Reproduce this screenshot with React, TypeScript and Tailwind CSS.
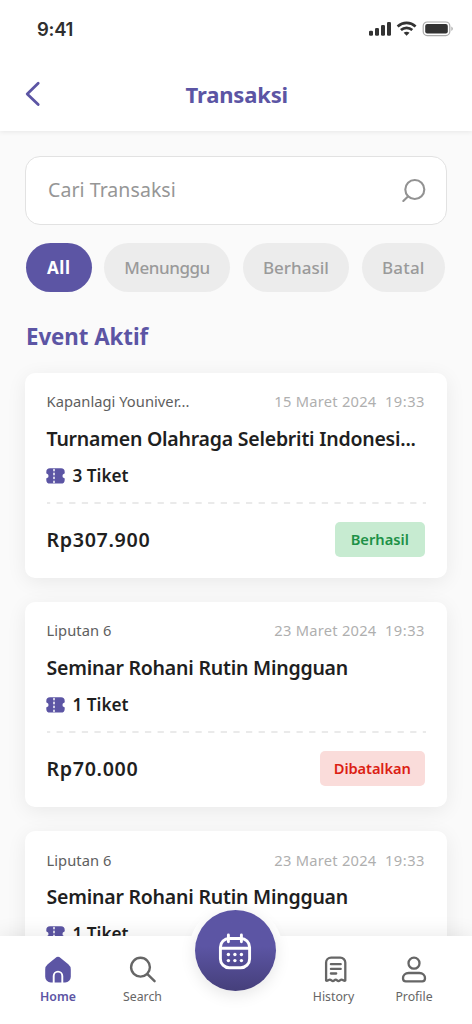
import React from "react";

type Transaction = {
  organizer: string;
  organizerClass: string;
  date: string;
  time: string;
  title: string;
  titleClass: string;
  tickets: number;
  price: string;
  status: "Berhasil" | "Dibatalkan";
};

const transactions: Transaction[] = [
  {
    organizer: "Kapanlagi Youniver...",
    organizerClass: "tracking-[0.04px]",
    date: "15 Maret 2024",
    time: "19:33",
    title: "Turnamen Olahraga Selebriti Indonesi...",
    titleClass: "tracking-[-0.23px]",
    tickets: 3,
    price: "Rp307.900",
    status: "Berhasil",
  },
  {
    organizer: "Liputan 6",
    organizerClass: "tracking-[0.05px]",
    date: "23 Maret 2024",
    time: "19:33",
    title: "Seminar Rohani Rutin Mingguan",
    titleClass: "tracking-[-0.22px]",
    tickets: 1,
    price: "Rp70.000",
    status: "Dibatalkan",
  },
  {
    organizer: "Liputan 6",
    organizerClass: "tracking-[0.05px]",
    date: "23 Maret 2024",
    time: "19:33",
    title: "Seminar Rohani Rutin Mingguan",
    titleClass: "tracking-[-0.22px]",
    tickets: 1,
    price: "Rp70.000",
    status: "Dibatalkan",
  },
];

function StatusBar() {
  return (
    <div className="flex h-[58px] items-center justify-between pl-[37px] pr-[18px] text-[#2f2f2f]">
      <span className="pt-[2px] font-['Inter',sans-serif] text-[18.5px] font-semibold tracking-[-0.3px]">9:41</span>
      <svg width="86" height="16" viewBox="0 0 86 16" fill="none">
        <g fill="#333">
          <rect x="1" y="9.7" width="4" height="5" rx="1.3" />
          <rect x="7" y="7" width="4" height="7.7" rx="1.3" />
          <rect x="13" y="4" width="4" height="10.7" rx="1.3" />
          <rect x="19" y="1" width="4" height="13.7" rx="1.3" />
        </g>
        <g stroke="#333" strokeWidth="2.7">
          <path d="M29.6 5.4c5.2-4.6 12.8-4.6 18 0" />
          <path d="M32.9 9c3.3-2.9 8.1-2.9 11.4 0" />
        </g>
        <path d="M35.7 11.7c1.7-1.3 4.1-1.3 5.8 0l-2.9 3z" fill="#333" />
        <rect x="55.2" y="1" width="26.6" height="13.6" rx="4" stroke="#aaa" strokeWidth="1.2" />
        <rect x="57.2" y="3" width="22.6" height="9.6" rx="2" fill="#333" />
        <path d="M83.4 5.6c1.9.7 1.9 3.7 0 4.4z" fill="#aaa" />
      </svg>
    </div>
  );
}

function TicketIcon() {
  return (
    <svg width="19" height="16" viewBox="0 0 19 16" className="-ml-[0.5px] shrink-0">
      <path
        d="M4 .2h11a3.7 3.7 0 0 1 3.7 3.7v1a.8.8 0 0 1-.6.8 2.3 2.3 0 0 0 0 4.4.8.8 0 0 1 .6.8v1a3.7 3.7 0 0 1-3.7 3.7H4a3.7 3.7 0 0 1-3.7-3.7v-1a.8.8 0 0 1 .6-.8 2.3 2.3 0 0 0 0-4.4.8.8 0 0 1-.6-.8v-1A3.7 3.7 0 0 1 4 .2z"
        fill="#5c55a4"
      />
      <path d="M8 1.4v13.2" stroke="#fff" strokeWidth="1.5" strokeLinecap="round" strokeDasharray="1.3 2.66" />
    </svg>
  );
}

function TransactionCard({ item }: { item: Transaction }) {
  const success = item.status === "Berhasil";
  return (
    <article className="h-[204.5px] shrink-0 rounded-[10px] bg-white pl-[21.5px] pr-[22px] pt-[17.2px] shadow-[0_4px_20px_rgba(0,0,0,0.07)]">
      <div className="flex h-[22px] items-center justify-between text-[14.7px]">
        <span className={`text-[#5e5e5e] ${item.organizerClass}`}>{item.organizer}</span>
        <span className="flex gap-[8.5px] text-[#afafaf]">
          <span className="tracking-[0.24px]">{item.date}</span>
          <span className="tracking-[0.5px]">{item.time}</span>
        </span>
      </div>
      <h3 className={`mt-[12.6px] h-[28px] whitespace-nowrap text-[19.5px] font-semibold leading-[28px] text-[#1f1f1f] ${item.titleClass}`}>
        {item.title}
      </h3>
      <div className="mt-[11px] flex h-[24px] items-center gap-[7.5px]">
        <TicketIcon />
        <span className="text-[17.2px] font-semibold leading-[24px] text-[#1f1f1f]">{item.tickets} Tiket</span>
      </div>
      <svg width="379" height="2" viewBox="0 0 379 2" className="mt-[14px] block">
        <path d="M0 1h379" stroke="#e4e4e4" strokeWidth="1.3" strokeDasharray="6.3 6.33" strokeDashoffset="3.1" />
      </svg>
      <div className="mt-[18px] flex h-[35px] items-center justify-between">
        <span className="text-[19.7px] font-semibold tracking-[0.65px] text-[#1f1f1f]">{item.price}</span>
        <span
          className={`flex h-[35px] items-center justify-center rounded-[5px] text-[14.7px] font-semibold ${
            success ? "w-[90.5px] bg-[#c7ebd1] text-[#1d9147]" : "w-[105.5px] bg-[#fadcda] tracking-[-0.12px] text-[#dc1f14]"
          }`}
        >
          {item.status}
        </span>
      </div>
    </article>
  );
}

function NavItem({ label, className, children }: { label: string; className: string; children: React.ReactNode }) {
  return (
    <button className={`flex flex-col items-center ${className}`}>
      {children}
      <span className="mt-[4px] text-[12.3px] leading-[17px]">{label}</span>
    </button>
  );
}

function BottomNav() {
  return (
    <nav className="absolute inset-x-0 bottom-0 h-[88px] bg-white shadow-[0_-3px_18px_rgba(0,0,0,0.08)]">
      <div className="absolute left-[188.5px] top-[-32px] size-[94px] rounded-full bg-white" />
      <div className="relative flex h-full pt-[20px]">
        <NavItem label="Home" className="ml-[28px] w-[60px] font-semibold text-[#5c55a4]">
          <svg width="28" height="28" viewBox="0 0 28 28">
            <path
              d="M11.4 1.9a4.1 4.1 0 0 1 5.2 0l7.7 6.3a6.8 6.8 0 0 1 2.5 5.2v7.4a5.6 5.6 0 0 1-5.6 5.6H6.8a5.6 5.6 0 0 1-5.6-5.6v-7.4a6.8 6.8 0 0 1 2.5-5.2z"
              fill="#5c55a4"
            />
            <path d="M9.7 27v-7.1a4.3 4.3 0 0 1 8.6 0V27" fill="none" stroke="#fff" strokeWidth="1.9" />
          </svg>
        </NavItem>
        <NavItem label="Search" className="ml-[24.5px] w-[60px] text-[#666]">
          <svg width="28" height="28" viewBox="0 0 28 28" fill="none" stroke="#666" strokeWidth="2.4" strokeLinecap="round">
            <circle cx="11.5" cy="11.2" r="9.4" />
            <path d="m18.4 18.1 7.2 7.1" />
          </svg>
        </NavItem>
        <div className="flex flex-1 justify-end">
          <NavItem label="History" className="w-[60px] text-[#666]">
            <svg width="28" height="28" viewBox="0 0 28 28" fill="none" stroke="#666" strokeWidth="2.3" strokeLinecap="round" strokeLinejoin="round" className="ml-[3px]">
              <path d="M5.1 24.6V6.6a5 5 0 0 1 5-5h9.2a5 5 0 0 1 5 5v18c-1.3.9-2.3-1-3.7-1-1.5 0-1.8 1.5-3.1 1.5s-1.5-1.5-2.8-1.5-1.5 1.5-2.8 1.5-1.6-1.5-3.1-1.5c-1.4 0-2.4 1.9-3.7 1z" />
              <path d="M9.9 8.2h9.800M9.9 12.900h9.800M9.900 17.500h5.300" />
            </svg>
          </NavItem>
        </div>
        <NavItem label="Profile" className="ml-[20.5px] mr-[28px] w-[60px] text-[#666]">
          <svg width="28" height="28" viewBox="0 0 28 28" fill="none" stroke="#666" strokeWidth="2.3">
            <circle cx="14" cy="7.2" r="5.5" />
            <path d="M8.7 17h10.600c3.500 0 5.700 2.500 5.700 5.200 0 1.800-1 3.100-2.800 3.100H5.800C4 25.300 3 24 3 22.200c0-2.700 2.200-5.200 5.700-5.200z" />
          </svg>
        </NavItem>
      </div>
      <button
        aria-label="Events"
        className="absolute left-[195px] top-[-26px] flex size-[81px] items-center justify-center rounded-full bg-linear-to-b from-[#5c55a4] from-45% to-[#453f7b] pr-[1.5px] shadow-[0_4px_16px_rgba(0,0,0,0.1)]"
      >
        <svg width="36" height="38" viewBox="0 0 36 38" fill="none" stroke="#fff" strokeWidth="2.9" strokeLinecap="round">
          <rect x="3.4" y="6.5" width="29.2" height="29.2" rx="8.8" />
          <path d="M3.4 16.2h29.2M11.4 2.9v6.8M24.4 2.9v6.8" />
          <g fill="#fff" stroke="none">
            <circle cx="11.4" cy="22.5" r="1.7" />
            <circle cx="17.9" cy="22.5" r="1.7" />
            <circle cx="24.4" cy="22.5" r="1.7" />
            <circle cx="11.4" cy="28.6" r="1.7" />
            <circle cx="17.9" cy="28.6" r="1.7" />
            <circle cx="24.4" cy="28.6" r="1.7" />
          </g>
        </svg>
      </button>
    </nav>
  );
}

export default function App() {
  return (
    <div className="relative flex h-[1024px] w-[472px] flex-col overflow-hidden bg-[#fafafa] font-['Noto_Sans',sans-serif]">
      <header className="h-[131px] shrink-0 bg-white shadow-[0_1px_5px_rgba(0,0,0,0.08)]">
        <StatusBar />
        <div className="grid h-[73px] grid-cols-[60px_1fr_60px] items-center">
          <button aria-label="Back" className="pl-[24px]">
            <svg width="18" height="28" viewBox="0 0 18 28" fill="none" stroke="#5c55a4" strokeWidth="2.8" strokeLinecap="round" strokeLinejoin="round">
              <path d="M14.2 2.300 3.200 12.900l11 10.700" />
            </svg>
          </button>
          <h1 className="pb-px pl-[1.5px] text-center text-[22px] font-bold tracking-[-0.17px] text-[#5c55a4]">Transaksi</h1>
        </div>
      </header>

      <main className="flex flex-col px-[25px] pt-[25px]">
        <div className="flex h-[69px] items-center justify-between rounded-[15px] border-[1.5px] border-[#e2e2e2] bg-white pl-[22px] pr-[19px]">
          <span className="pb-px text-[19.5px] tracking-[0.06px] text-[#969696]">Cari Transaksi</span>
          <svg width="26" height="26" viewBox="0 0 26 26" fill="none" stroke="#929292" strokeWidth="2.1" strokeLinecap="round">
            <circle cx="13.8" cy="11.5" r="9.5" />
            <path d="m7 18.400-4.700 4.600" />
          </svg>
        </div>

        <div className="mt-[18px] flex gap-[12.6px] pl-px text-[17px] font-medium text-[#9a9a9a]">
          <button className="h-[48.5px] w-[65.5px] rounded-full bg-[#5c55a4] font-bold tracking-[0.6px] text-white">All</button>
          <button className="h-[48.5px] w-[126px] rounded-full bg-[#ececec] tracking-[-0.45px]">Menunggu</button>
          <button className="h-[48.5px] w-[106.5px] rounded-full bg-[#ececec]">Berhasil</button>
          <button className="h-[48.5px] w-[83px] rounded-full bg-[#ececec] tracking-[0.2px]">Batal</button>
        </div>

        <h2 className="mt-[29.5px] h-[32px] pl-px text-[22.3px] font-bold leading-[32px] tracking-[-0.06px] text-[#5c55a4]">Event Aktif</h2>

        <section className="mt-[20px] flex flex-col gap-[24.7px]">
          {transactions.map((item, i) => (
            <TransactionCard key={i} item={item} />
          ))}
        </section>
      </main>

      <BottomNav />
    </div>
  );
}
